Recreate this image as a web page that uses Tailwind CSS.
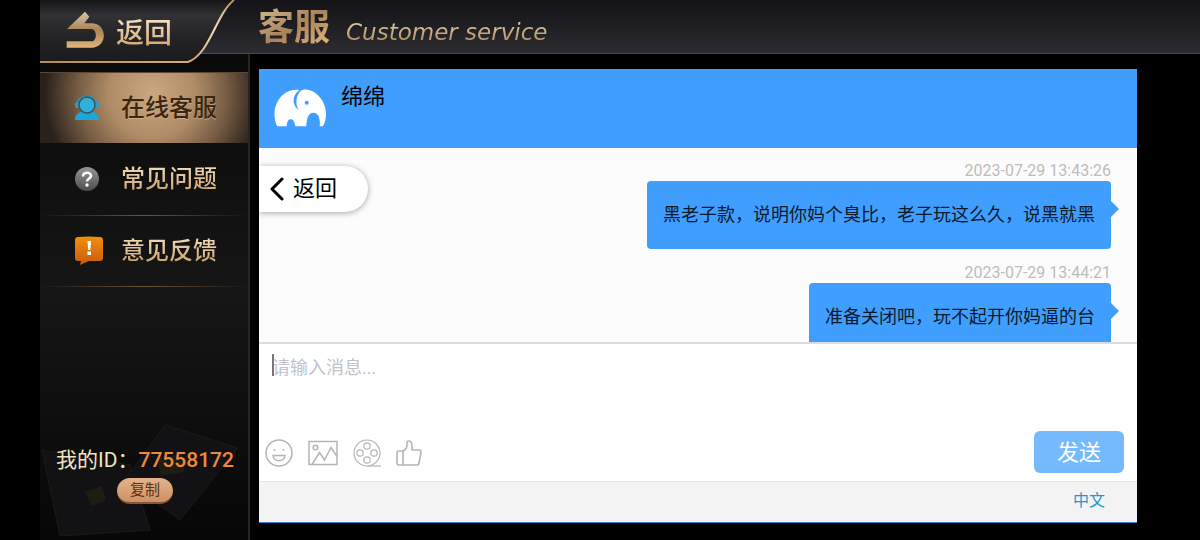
<!DOCTYPE html>
<html lang="zh-CN">
<head>
    <meta charset="UTF-8">
    <meta name="viewport" content="width=device-width, initial-scale=1.0">
    <title>客服</title>
    <script src="https://cdn.jsdelivr.net/npm/@tailwindcss/browser@4"></script>
</head>
<body class="bg-black font-['Roboto','Noto_Sans_CJK_SC',sans-serif]">
    <div class="flex flex-col h-screen pl-10 overflow-hidden">
        <!-- Top bar -->
        <header class="relative z-10 flex items-start shrink-0 h-[54px] bg-linear-to-b from-[#141418] via-[#1f1f23] to-[#2c2c31] border-b border-[#57473a]">
            <a href="#" class="relative shrink-0 w-[200px] h-16 flex items-center pl-[26px]">
                <svg class="absolute inset-0" width="200" height="64" viewBox="0 0 200 64">
                    <defs>
                        <linearGradient id="tab" x1="0" y1="0" x2="0" y2="1">
                            <stop offset="0" stop-color="#151517"/>
                            <stop offset=".25" stop-color="#323234"/>
                            <stop offset=".6" stop-color="#242426"/>
                            <stop offset="1" stop-color="#1b1b1d"/>
                        </linearGradient>
                        <linearGradient id="rim" x1="0" y1="0" x2="1" y2="0">
                            <stop offset="0" stop-color="#b98a5a"/>
                            <stop offset=".8" stop-color="#d9ab78"/>
                            <stop offset=".9" stop-color="#f3dcc0"/>
                            <stop offset="1" stop-color="#b98a5a"/>
                        </linearGradient>
                    </defs>
                    <path d="M0 0H194C176 14 170 54 148 62H0Z" fill="url(#tab)"/>
                    <path d="M0 62H148C170 54 176 14 194 0" fill="none" stroke="url(#rim)" stroke-width="2"/>
                </svg>
                <svg class="relative -mt-1" width="38" height="38" viewBox="108 28 114 114">
                    <defs>
                        <linearGradient id="gold" x1="0" y1="0" x2="0" y2="1">
                            <stop offset="0" stop-color="#d8c7a8"/>
                            <stop offset=".5" stop-color="#a98456"/>
                            <stop offset="1" stop-color="#e2b577"/>
                        </linearGradient>
                    </defs>
                    <path d="M111 82L165 30L178 45L163 65H184C234 65 234 138 184 138H110V119H184C202 119 202 82 184 82Z" fill="url(#gold)"/>
                </svg>
                <span class="relative ml-3 mt-1 text-[28px] leading-9 font-medium bg-linear-to-b from-[#f7e8cf] to-[#cf9a62] bg-clip-text text-transparent">返回</span>
            </a>
            <h1 class="flex items-baseline gap-4 pl-[18px] pt-[6px]">
                <span class="text-4xl leading-11 font-bold bg-linear-to-br from-[#d3b993] via-[#a98258] to-[#f0c087] bg-clip-text text-transparent">客服</span>
                <span class="text-[23px] italic font-['DejaVu_Sans',sans-serif] bg-linear-to-b from-[#eadcc2] to-[#a5783f] bg-clip-text text-transparent">Customer service</span>
            </h1>
        </header>

        <div class="flex flex-1 min-h-0">
            <!-- Sidebar -->
            <aside class="relative flex flex-col shrink-0 w-[210px] pt-[18px] pb-9 bg-linear-to-b from-[#0a0a0b] via-[#161617] to-[#070707] border-r-2 border-[#2b231d]">
                <!-- Faint playing cards behind the ID -->
                <svg class="absolute left-0 bottom-0" width="208" height="120" viewBox="0 0 208 120">
                    <g fill="#121214" stroke="#1e1a16">
                        <path d="M2 30L90 45L110 110L20 116Z"/>
                        <path d="M125 5L198 28L140 100L85 60Z"/>
                    </g>
                    <path d="M118 38L142 34L144 52L120 56ZM45 72L62 66L66 80L52 86Z" fill="#201b13"/>
                </svg>
                <nav>
                    <a href="#" class="flex items-center h-[71px] pl-[34px] bg-[radial-gradient(108px_110px_at_54%_30%,#cba880,#b08c66_40%,#745b43_70%,#2a211a)] border-t border-[#5a4734] text-[#3b2613]">
                        <svg width="26" height="26" viewBox="0 0 26 26">
                            <path d="M3 11C2 -2 24 -2 23 11" fill="none" stroke="#3e8fae" stroke-width="1.5"/>
                            <rect x="1" y="7" width="5" height="6" rx="2" fill="#2b9cc6"/>
                            <rect x="20" y="7" width="5" height="6" rx="2" fill="#2b9cc6"/>
                            <path d="M1 25C1 19 5 18 8 16H18C21 18 25 19 25 25Z" fill="#1ba6dc"/>
                            <circle cx="13" cy="10" r="8" fill="#2fb0df" stroke="#3d5458" stroke-width="1.5"/>
                        </svg>
                        <span class="ml-[21px] text-2xl font-medium [text-shadow:0_1px_0_#d0ad80]">在线客服</span>
                    </a>
                    <a href="#" class="flex items-center h-[72px] pl-[34px]">
                        <svg width="26" height="26" viewBox="0 0 26 26">
                            <defs>
                                <linearGradient id="ball" x1="0" y1="0" x2="0" y2="1">
                                    <stop offset="0" stop-color="#969696"/>
                                    <stop offset="1" stop-color="#4c4c4c"/>
                                </linearGradient>
                            </defs>
                            <circle cx="13" cy="13" r="12" fill="url(#ball)"/>
                            <path d="M9 10.500C9 5.500 17 5.500 17 10C17 12.500 13 12.500 13 15.500" fill="none" stroke="#fff" stroke-width="2.600"/>
                            <circle cx="13" cy="19" r="1.700" fill="#fff"/>
                        </svg>
                        <span class="ml-[21px] text-2xl font-medium bg-linear-to-b from-[#f5e2bf] to-[#c99b64] bg-clip-text text-transparent">常见问题</span>
                    </a>
                    <div class="h-px bg-linear-to-r from-transparent via-[#6d543c] to-transparent"></div>
                    <a href="#" class="flex items-center h-[70px] pl-[34px]">
                        <svg width="30" height="30" viewBox="0 0 30 30">
                            <defs>
                                <linearGradient id="note" x1="0" y1="0" x2="0" y2="1">
                                    <stop offset="0" stop-color="#f08f10"/>
                                    <stop offset="1" stop-color="#c9590b"/>
                                </linearGradient>
                            </defs>
                            <path d="M4 1Q15 0 26 1Q29 1 29 4V22Q29 25 26 25H15L6 29L7 25H4Q1 25 1 22V4Q1 1 4 1Z" fill="url(#note)"/>
                            <path d="M13.500 5H17L16.300 14H14.200Z" fill="#fff"/>
                            <rect x="13.500" y="15.500" width="3.500" height="3.500" fill="#fff"/>
                        </svg>
                        <span class="ml-[17px] text-2xl font-medium bg-linear-to-b from-[#f5e2bf] to-[#c99b64] bg-clip-text text-transparent">意见反馈</span>
                    </a>
                    <div class="h-px bg-linear-to-r from-transparent via-[#6d543c] to-transparent"></div>
                </nav>
                <div class="relative mt-auto pl-[2px] flex flex-col items-center gap-1">
                    <p class="flex items-center whitespace-nowrap text-[21px] leading-7 text-[#efe3c4]">我的ID：<span class="font-medium text-[#ee8a3c]">77558172</span></p>
                    <button class="h-[26px] px-[13px] rounded-full bg-linear-to-b from-[#e3b48b] to-[#cf9066] border-b-2 border-[#8a5535] text-[15px] leading-6 text-[#5b3216]">复制</button>
                </div>
            </aside>

            <!-- Chat window -->
            <main class="relative flex flex-col flex-1 min-w-0 mt-[15px] ml-[9px] mr-[63px] mb-[17px] bg-white border-b border-[#2f7fd0]">
                <div class="flex items-start shrink-0 h-[79px] px-[15px] bg-[#409eff]">
                    <svg class="mt-5" width="52" height="38" viewBox="0 0 156 112">
                        <path d="M10 111C-4 85 -2 45 25 18C40 4 60 0 76 2C62 12 56 28 60 42C63 53 68 58 74 62C68 52 65 40 69 24C73 10 80 3 88 1C120 -2 156 30 156 74C156 90 152 104 146 111L137 111C140 80 130 70 118 70C104 70 98 84 97 111H64C62 95 56 90 50 90C42 90 39 98 38 111Z" fill="#fff"/>
                        <circle cx="98" cy="40" r="6" fill="#409eff"/>
                    </svg>
                    <h2 class="ml-[15px] mt-3 text-[22px] leading-8 text-black">绵绵</h2>
                </div>

                <!-- Messages -->
                <div class="h-[196px] shrink-0 overflow-hidden bg-[#fcfcfc] border-b-2 border-[#dcdcdc] pt-[13px] pr-[26px]">
                    <div class="flex flex-col items-end mb-[14px]">
                        <time class="text-base leading-5 text-[#bdbdbd]">2023-07-29 13:43:26</time>
                        <p class="relative h-[68px] px-4 flex items-center rounded bg-[#409eff] text-lg text-[#0a1a2b]">
                            黑老子款，说明你妈个臭比，老子玩这么久，说黑就黑
                            <svg class="absolute -right-2 top-5" width="8" height="16"><path d="M0 0L8 8L0 16Z" fill="#409eff"/></svg>
                        </p>
                    </div>
                    <div class="flex flex-col items-end">
                        <time class="text-base leading-5 text-[#bdbdbd]">2023-07-29 13:44:21</time>
                        <p class="relative h-[68px] px-4 flex items-center rounded bg-[#409eff] text-lg text-[#0a1a2b]">
                            准备关闭吧，玩不起开你妈逼的台
                            <svg class="absolute -right-2 top-5" width="8" height="16"><path d="M0 0L8 8L0 16Z" fill="#409eff"/></svg>
                        </p>
                    </div>
                </div>

                <!-- Floating back button -->
                <button class="absolute left-0 top-[97px] flex items-center gap-2 h-[46px] pl-[11px] pr-[31px] rounded-r-full bg-white shadow-[0_1px_6px_rgba(0,0,0,0.35)] text-[22px] leading-8 text-black">
                    <svg width="15" height="24" viewBox="0 0 15 24" fill="none" stroke="#000" stroke-width="3" stroke-linecap="round" stroke-linejoin="round"><path d="M12 2L2 12L12 22"/></svg>
                    返回
                </button>

                <!-- Composer -->
                <form class="flex flex-col flex-1 min-h-0">
                    <div class="relative flex-1 min-h-0">
                        <textarea aria-label="消息" placeholder="请输入消息..." class="block w-full h-full resize-none px-[13px] pt-[10px] text-lg leading-7 outline-none placeholder:text-[#c0c4cc]"></textarea>
                        <span class="absolute left-[13px] top-[10px] w-0.5 h-[22px] bg-[#777]"></span>
                    </div>
                    <div class="flex items-center shrink-0 h-11 mb-[7px] pl-[5px] pr-[13px] text-[#b5b5b5]">
                        <button type="button" aria-label="表情" class="pt-[2px]">
                            <svg width="30" height="30" viewBox="0 0 30 30" fill="none" stroke="currentColor" stroke-width="1.500">
                                <circle cx="15" cy="15" r="13"/>
                                <circle cx="10.500" cy="12" r="1" fill="currentColor" stroke="none"/>
                                <circle cx="19.500" cy="12" r="1" fill="currentColor" stroke="none"/>
                                <path d="M9 17.500H21C20 24.500 10 24.500 9 17.500Z"/>
                            </svg>
                        </button>
                        <button type="button" aria-label="图片" class="ml-[13px] pt-[2px]">
                            <svg width="32" height="30" viewBox="0 0 32 30" fill="none" stroke="currentColor" stroke-width="1.500">
                                <rect x="2" y="3.500" width="28" height="23"/>
                                <circle cx="8.500" cy="9.500" r="2.300"/>
                                <path d="M5 26.500L12.500 14.500L17.500 22L24 9.500L30 18.500"/>
                            </svg>
                        </button>
                        <button type="button" aria-label="视频" class="ml-[13px] pt-[2px]">
                            <svg width="30" height="30" viewBox="0 0 30 30" fill="none" stroke="currentColor" stroke-width="1.200">
                                <circle cx="15" cy="15" r="13"/>
                                <circle cx="15" cy="8" r="3.200"/>
                                <circle cx="8" cy="15" r="3.200"/>
                                <circle cx="22" cy="15" r="3.200"/>
                                <circle cx="15" cy="22" r="3.200"/>
                                <path d="M15 28H29"/>
                            </svg>
                        </button>
                        <button type="button" aria-label="点赞" class="ml-[13px] pt-[2px]">
                            <svg width="30" height="30" viewBox="0 0 30 30" fill="none" stroke="currentColor" stroke-width="1.600" stroke-linejoin="round">
                                <path d="M3.500 13H8V27H4Q2 27 2 24.500V14.500Q2 13 3.500 13Z"/>
                                <path d="M8 13Q12 11 12 7V4.500Q12 3 13.500 3Q17 3 17 8V12H24Q26.500 12 26 14.500L24 25Q23.600 27 21.500 27H8"/>
                            </svg>
                        </button>
                        <button type="submit" class="ml-auto w-[90px] h-[42px] rounded-md bg-[#75b9ff] text-[22px] text-white">发送</button>
                    </div>
                </form>

                <div class="flex items-center justify-end shrink-0 h-[41px] pr-8 bg-[#f3f3f3] border-t border-[#e4e4e4]">
                    <a href="#" class="pb-[2px] text-base text-[#1a97d4]">中文</a>
                </div>
            </main>
        </div>
    </div>
</body>
</html>
